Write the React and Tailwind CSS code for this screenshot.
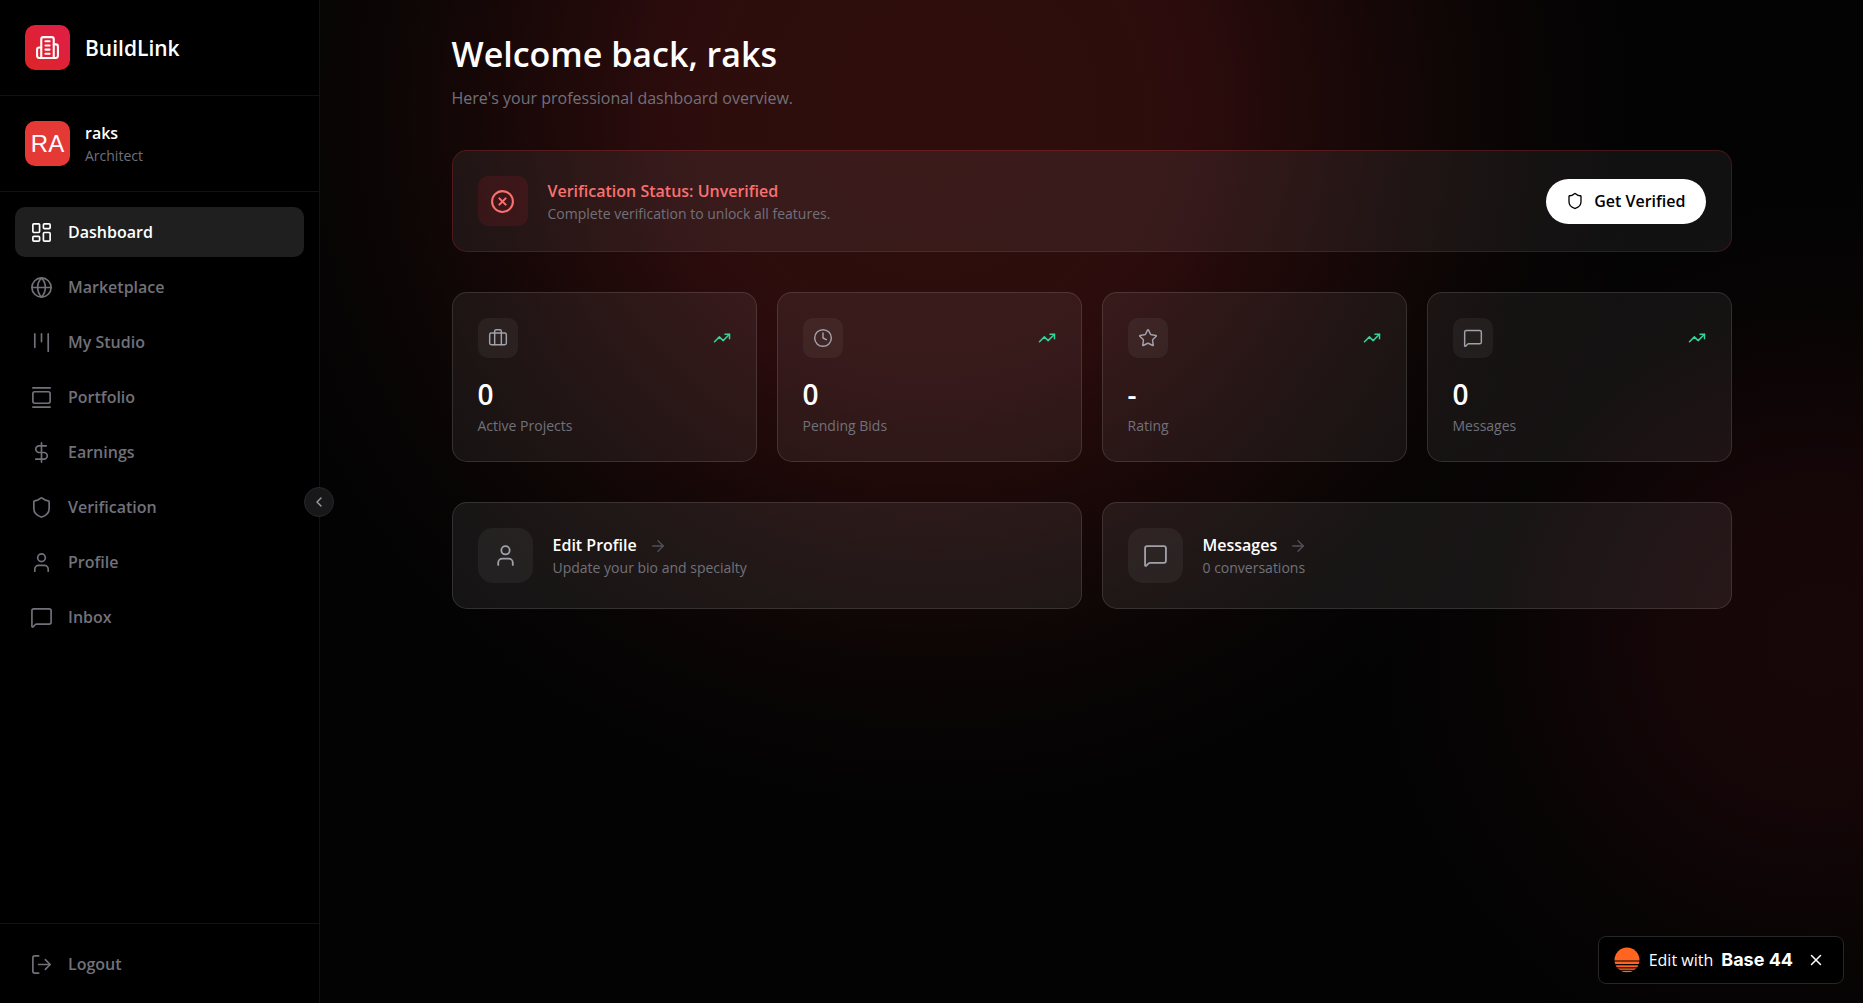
import React from 'react';
import {
  LayoutDashboard,
  Globe,
  Kanban,
  GalleryVertical,
  DollarSign,
  Shield,
  User,
  MessageSquare,
  LogOut,
  ChevronLeft,
  CircleX,
  Briefcase,
  Clock,
  Star,
  TrendingUp,
  ArrowRight,
  X,
} from 'lucide-react';

// Sidebar entries
const navItems = [
  { label: 'Dashboard', icon: LayoutDashboard, active: true },
  { label: 'Marketplace', icon: Globe },
  { label: 'My Studio', icon: Kanban },
  { label: 'Portfolio', icon: GalleryVertical },
  { label: 'Earnings', icon: DollarSign },
  { label: 'Verification', icon: Shield },
  { label: 'Profile', icon: User },
  { label: 'Inbox', icon: MessageSquare },
];

const stats = [
  { label: 'Active Projects', value: '0', icon: Briefcase },
  { label: 'Pending Bids', value: '0', icon: Clock },
  { label: 'Rating', value: '-', icon: Star },
  { label: 'Messages', value: '0', icon: MessageSquare },
];

const actions = [
  { title: 'Edit Profile', text: 'Update your bio and specialty', icon: User },
  { title: 'Messages', text: '0 conversations', icon: MessageSquare },
];

const BuildingIcon = () => (
  <svg
    viewBox="0 0 24 24"
    className="size-[25px] text-white"
    fill="none"
    stroke="currentColor"
    strokeWidth="2"
    strokeLinecap="round"
    strokeLinejoin="round"
  >
    <path d="M6 22V4a2 2 0 0 1 2-2h8a2 2 0 0 1 2 2v18Z" />
    <path d="M6 12H4a2 2 0 0 0-2 2v6a2 2 0 0 0 2 2h2" />
    <path d="M18 9h2a2 2 0 0 1 2 2v9a2 2 0 0 1-2 2h-2" />
    <path d="M10 6h4M10 10h4M10 14h4M10 18h4" />
  </svg>
);

const Sidebar = () => (
  <aside className="relative flex w-80 shrink-0 flex-col border-r border-white/7 bg-black/80">
    <div className="flex items-center gap-[15px] border-b border-white/7 p-[25px]">
      <div className="flex size-[45px] items-center justify-center rounded-[10px] bg-linear-to-tr/srgb from-[#dc2626] to-[#e11d48]">
        <BuildingIcon />
      </div>
      <span className="text-[21px] font-semibold leading-8 text-white">BuildLink</span>
    </div>

    <div className="flex items-center gap-[15px] border-b border-white/7 p-[25px]">
      <div className="flex size-[45px] items-center justify-center rounded-[10px] bg-[#e53935] font-['Liberation_Sans'] text-2xl text-white">
        RA
      </div>
      <div>
        <p className="text-base font-semibold leading-[25px] text-white">raks</p>
        <p className="text-sm leading-5 text-[#71717a]">Architect</p>
      </div>
    </div>

    <nav className="flex flex-1 flex-col gap-[5px] p-[15px]">
      {navItems.map(({ label, icon: Icon, active }) => (
        <a
          key={label}
          href="#"
          className={`flex h-[50px] items-center gap-[15px] rounded-[10px] px-[15px] text-base font-semibold ${
            active ? 'bg-white/12 text-white' : 'text-[#71717a]'
          }`}
        >
          <Icon className="size-[23px]" strokeWidth={1.75} />
          {label}
        </a>
      ))}
    </nav>

    <div className="border-t border-white/7 p-[15px] pb-[14px]">
      <button className="flex h-[50px] w-full items-center gap-[15px] rounded-[10px] px-[15px] text-base font-semibold text-[#71717a]">
        <LogOut className="size-[23px]" strokeWidth={1.75} />
        Logout
      </button>
    </div>

    <button
      aria-label="Collapse sidebar"
      className="absolute -right-[15px] top-1/2 flex size-[30px] -translate-y-1/2 items-center justify-center rounded-full border border-zinc-800 bg-zinc-900 text-zinc-400"
    >
      <ChevronLeft className="size-4" />
    </button>
  </aside>
);

const VerificationBanner = () => (
  <section className="mt-10 flex items-center gap-5 rounded-[15px] border border-red-500/22 bg-white/6 p-[25px]">
    <div className="flex size-[50px] items-center justify-center rounded-[10px] bg-red-500/10">
      <CircleX className="size-[25px] text-[#f87171]" />
    </div>
    <div className="flex-1">
      <h2 className="text-base font-semibold leading-[25px] text-[#f87171]">Verification Status: Unverified</h2>
      <p className="text-sm leading-5 text-[#71717a]">Complete verification to unlock all features.</p>
    </div>
    <button className="flex h-[45px] items-center gap-[10px] rounded-full bg-white px-5 text-base font-semibold text-black">
      <Shield className="size-[18px]" strokeWidth={1.75} />
      Get Verified
    </button>
  </section>
);

const StatCard = ({ label, value, icon: Icon }) => (
  <div className="rounded-[15px] border border-white/12 bg-white/6 p-[25px]">
    <div className="flex items-center justify-between">
      <div className="flex size-10 items-center justify-center rounded-[10px] bg-white/5">
        <Icon className="size-5 text-[#a1a1aa]" strokeWidth={1.75} />
      </div>
      <TrendingUp className="size-[18px] text-[#34d399]" />
    </div>
    <p className="mt-5 text-[28px] font-semibold leading-8 text-white">{value}</p>
    <p className="mt-[6px] text-sm leading-5 text-[#71717a]">{label}</p>
  </div>
);

const ActionCard = ({ title, text, icon: Icon }) => (
  <a href="#" className="flex items-center gap-5 rounded-[15px] border border-white/12 bg-white/7 p-[25px]">
    <div className="flex size-[55px] items-center justify-center rounded-[15px] bg-white/5">
      <Icon className="size-[25px] text-[#a1a1aa]" strokeWidth={1.75} />
    </div>
    <div>
      <h3 className="flex items-center gap-3 text-base font-semibold leading-[25px] text-white">
        {title}
        <ArrowRight className="size-[18px] text-[#52525b]" strokeWidth={1.75} />
      </h3>
      <p className="text-sm leading-5 text-[#71717a]">{text}</p>
    </div>
  </a>
);

const EditBadge = () => (
  <div className="fixed bottom-[19px] right-[19px] flex h-12 items-center rounded-lg border border-zinc-800 bg-black pl-[15px] pr-[18px] text-white">
    <svg viewBox="0 0 26 26" className="size-[26px]">
      <defs>
        <clipPath id="sun">
          <circle cx="13" cy="13" r="12.5" />
        </clipPath>
      </defs>
      <g clipPath="url(#sun)" fill="#ff6420">
        <rect width="26" height="13.5" />
        <rect y="14.5" width="26" height="2.5" />
        <rect y="18.3" width="26" height="2" />
        <rect y="21.4" width="26" height="1.4" />
        <rect y="23.8" width="26" height="1.5" />
      </g>
    </svg>
    <a href="#" className="ml-[9px] flex items-center gap-2 text-base">
      Edit with
      <span className="font-['Inter'] text-lg font-bold">Base 44</span>
    </a>
    <button aria-label="Close" className="ml-[14px]">
      <X className="size-[18px]" />
    </button>
  </div>
);

const App = () => (
  <div className="flex min-h-screen bg-[#030303] bg-[radial-gradient(circle_at_50%_110px,rgb(200_48_44/.22)_0,rgb(200_48_48/.215)_220px,rgb(200_45_50/.195)_290px,rgb(200_45_45/.165)_330px,rgb(200_45_45/.11)_430px,rgb(200_60_50/.055)_530px,rgb(200_60_60/.02)_620px,transparent_720px),radial-gradient(circle_at_calc(100%_-_43px)_640px,rgb(200_35_55/.105)_0,rgb(200_35_55/.1)_100px,rgb(200_35_55/.085)_170px,rgb(200_40_55/.05)_260px,rgb(200_45_60/.025)_330px,rgb(200_60_70/.01)_390px,transparent_470px)] font-['Open_Sans','Noto_Sans',sans-serif]">
    <Sidebar />
    <main className="flex-1 px-8 py-[30px]">
      <div className="mx-auto max-w-[1280px]">
        <h1 className="text-[34px] font-semibold leading-[48px] text-white">Welcome back, raks</h1>
        <p className="mt-2 text-base leading-6 text-[#71717a]">Here's your professional dashboard overview.</p>
        <VerificationBanner />
        <div className="mt-10 grid grid-cols-4 gap-5">
          {stats.map((stat) => (
            <StatCard key={stat.label} {...stat} />
          ))}
        </div>
        <div className="mt-10 grid grid-cols-2 gap-5">
          {actions.map((action) => (
            <ActionCard key={action.title} {...action} />
          ))}
        </div>
      </div>
    </main>
    <EditBadge />
  </div>
);

export default App;
